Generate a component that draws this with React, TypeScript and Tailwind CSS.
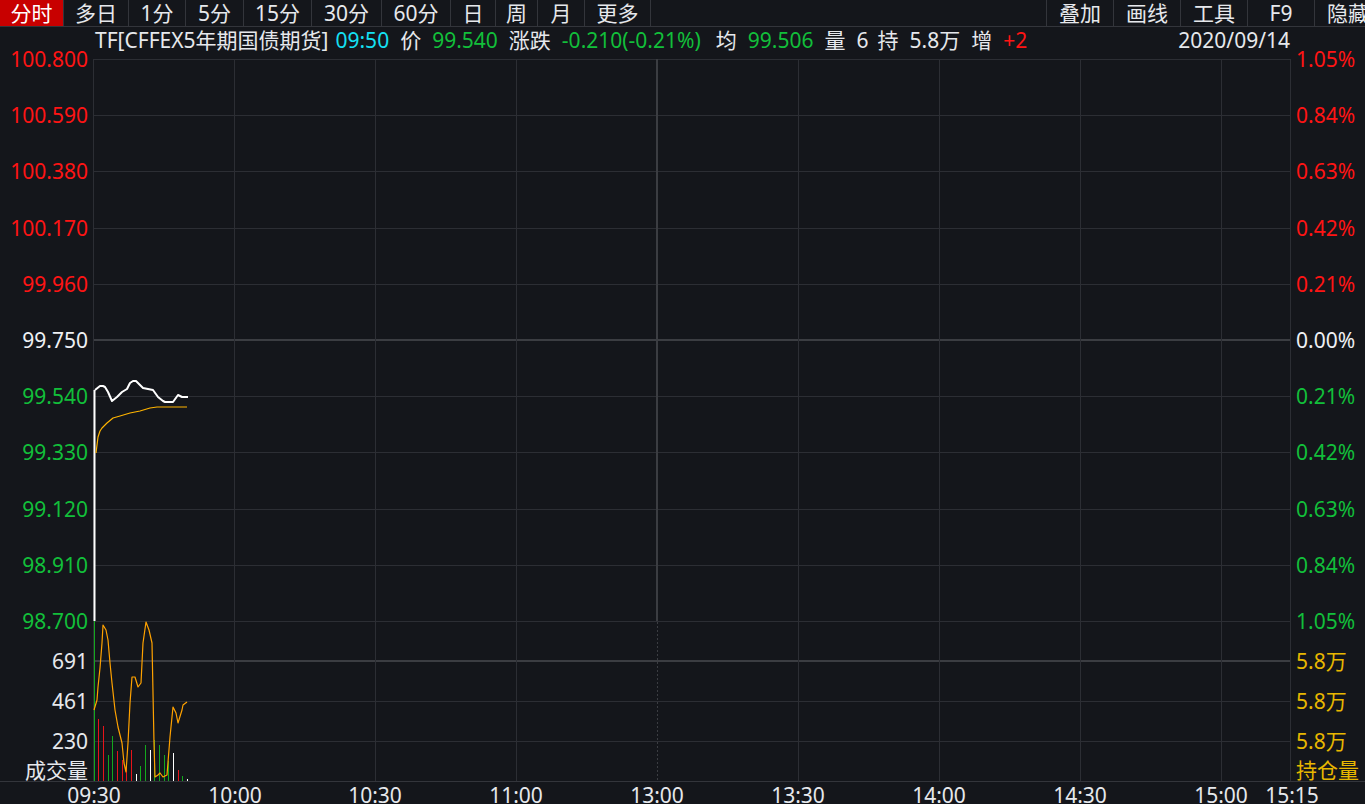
import React from "react";

const RED = "text-[#ff1414]";
const GREEN = "text-[#12bf3a]";

const leftTabs: { label: string; w: string; active?: boolean }[] = [
  { label: "分时", w: "w-[64px]", active: true },
  { label: "多日", w: "w-[65px]" },
  { label: "1分", w: "w-[57px]" },
  { label: "5分", w: "w-[58px]" },
  { label: "15分", w: "w-[68px]" },
  { label: "30分", w: "w-[70px]" },
  { label: "60分", w: "w-[69px]" },
  { label: "日", w: "w-[45px]" },
  { label: "周", w: "w-[42px]" },
  { label: "月", w: "w-[47px]" },
  { label: "更多", w: "w-[66px]" },
];

const rightTabs = ["叠加", "画线", "工具", "F9", "隐藏"];

const priceLabels: { v: string; c: string }[] = [
  { v: "100.800", c: RED },
  { v: "100.590", c: RED },
  { v: "100.380", c: RED },
  { v: "100.170", c: RED },
  { v: "99.960", c: RED },
  { v: "99.750", c: "text-[#eef0f4]" },
  { v: "99.540", c: GREEN },
  { v: "99.330", c: GREEN },
  { v: "99.120", c: GREEN },
  { v: "98.910", c: GREEN },
  { v: "98.700", c: GREEN },
];

const pctLabels: { v: string; c: string }[] = [
  { v: "1.05%", c: RED },
  { v: "0.84%", c: RED },
  { v: "0.63%", c: RED },
  { v: "0.42%", c: RED },
  { v: "0.21%", c: RED },
  { v: "0.00%", c: "text-[#eef0f4]" },
  { v: "0.21%", c: GREEN },
  { v: "0.42%", c: GREEN },
  { v: "0.63%", c: GREEN },
  { v: "0.84%", c: GREEN },
  { v: "1.05%", c: GREEN },
];

const timeLabels: { t: string; x: number }[] = [
  { t: "09:30", x: 94 },
  { t: "10:00", x: 235 },
  { t: "10:30", x: 375 },
  { t: "11:00", x: 516 },
  { t: "13:00", x: 657 },
  { t: "13:30", x: 798 },
  { t: "14:00", x: 939 },
  { t: "14:30", x: 1080 },
  { t: "15:00", x: 1221 },
  { t: "15:15", x: 1292 },
];

const W = 1198;
const H = 722;
const hLines = [0, 56, 112, 169, 225, 337, 393, 450, 506, 562];
const vLines = [141, 282, 423, 705, 846, 987, 1128];

const pricePts = [
  [2, 331], [7, 327], [10, 327], [12, 328], [15, 333], [19, 342], [24, 338], [29, 333],
  [34, 330], [37, 324], [40, 322], [43, 322], [45, 324], [50, 329], [55, 330], [60, 331],
  [65, 338], [70, 342], [72, 343], [80, 343], [85, 336], [89, 338], [95, 338],
];

const avgPts = [
  [3, 394], [5, 378], [7, 372], [9, 369], [14, 364], [20, 359], [27, 357], [37, 354],
  [47, 352], [57, 349], [64, 348], [94, 348],
];

const oiPts = [
  [1, 651], [4, 641], [5, 628], [7, 609], [9, 584], [10, 566], [13, 571], [15, 581],
  [17, 604], [19, 624], [22, 651], [25, 668], [29, 684], [31, 704], [33, 713], [35, 684],
  [37, 644], [39, 618], [42, 618], [45, 628], [48, 624], [50, 584], [53, 563], [56, 571],
  [59, 584], [60, 634], [61, 684], [62, 718], [65, 716], [67, 714], [70, 718], [74, 716],
  [77, 678], [80, 648], [83, 654], [85, 664], [89, 651], [90, 646], [94, 643],
];

const bars: { x: number; top: number; c: string }[] = [
  { x: 1, top: 562, c: "#14a81e" },
  { x: 5, top: 660, c: "#e8141a" },
  { x: 10, top: 667, c: "#e8141a" },
  { x: 15, top: 696, c: "#14a81e" },
  { x: 19, top: 677, c: "#14a81e" },
  { x: 24, top: 692, c: "#e8141a" },
  { x: 29, top: 701, c: "#e8141a" },
  { x: 33, top: 704, c: "#e8141a" },
  { x: 38, top: 691, c: "#e8141a" },
  { x: 43, top: 715, c: "#ffffff" },
  { x: 47, top: 707, c: "#14a81e" },
  { x: 52, top: 686, c: "#14a81e" },
  { x: 57, top: 691, c: "#ffffff" },
  { x: 61, top: 681, c: "#14a81e" },
  { x: 66, top: 686, c: "#14a81e" },
  { x: 71, top: 696, c: "#14a81e" },
  { x: 75, top: 702, c: "#14a81e" },
  { x: 80, top: 694, c: "#ffffff" },
  { x: 85, top: 711, c: "#e8141a" },
  { x: 89, top: 717, c: "#14a81e" },
  { x: 94, top: 720, c: "#ffffff" },
];

const toPath = (pts: number[][]) =>
  pts.map((p, i) => `${i === 0 ? "M" : "L"}${p[0]},${p[1]}`).join(" ");

function Chart() {
  const grid = "#2c2e34";
  const thick = "#3b3d42";
  return (
    <svg width={W} height={H} viewBox={`0 0 ${W} ${H}`} className="block shrink-0">
      <g shapeRendering="crispEdges">
        {hLines.map((y) => (
          <line key={"h" + y} x1={0} x2={W} y1={y + 0.5} y2={y + 0.5} stroke={grid} strokeWidth={1} />
        ))}
        <line x1={0} x2={W} y1={281} y2={281} stroke={thick} strokeWidth={2} />
        <line x1={0} x2={W} y1={602} y2={602} stroke={thick} strokeWidth={2} />
        <line x1={0} x2={W} y1={642.5} y2={642.5} stroke={grid} strokeWidth={1} />
        <line x1={0} x2={W} y1={682.5} y2={682.5} stroke={grid} strokeWidth={1} />
        {vLines.map((x) => (
          <line key={"v" + x} x1={x + 0.5} x2={x + 0.5} y1={0} y2={H} stroke={grid} strokeWidth={1} />
        ))}
        <line x1={564} x2={564} y1={0} y2={562} stroke={thick} strokeWidth={2} />
        <line x1={564.5} x2={564.5} y1={563} y2={H} stroke={thick} strokeWidth={1} strokeDasharray="2 2" />
        <line x1={0.5} x2={0.5} y1={0} y2={H} stroke={grid} strokeWidth={1} />
        <line x1={W - 0.5} x2={W - 0.5} y1={0} y2={H} stroke={grid} strokeWidth={1} />
        {bars.map((b, i) => (
          <rect key={"b" + i} x={b.x} y={b.top} width={1} height={H - b.top} fill={b.c} />
        ))}
      </g>
      <path d={toPath(oiPts)} fill="none" stroke="#ffa200" strokeWidth={1.2} strokeLinejoin="round" />
      <line x1={1.5} x2={1.5} y1={562} y2={331} stroke="#ffffff" strokeWidth={2} />
      <path d={toPath(avgPts)} fill="none" stroke="#ffb400" strokeWidth={1.2} strokeLinejoin="round" />
      <path d={toPath(pricePts)} fill="none" stroke="#ffffff" strokeWidth={2} strokeLinejoin="round" />
    </svg>
  );
}

export default function App() {
  return (
    <div className="w-[1365px] h-[804px] overflow-hidden bg-[#14161b] text-[#e6e8ec] font-['Noto_Sans','Noto_Sans_CJK_SC',sans-serif] text-[21px] leading-[20px] select-none">
      {/* toolbar */}
      <div className="flex h-[27px] border-b border-[#33353b]">
        <div className="flex shrink-0">
          {leftTabs.map((t) => (
            <div
              key={t.label}
              className={`${t.w} flex items-center justify-center border-r border-[#33353b] ${
                t.active ? "bg-[#c80000] text-white" : "text-[#e6e8ec]"
              }`}
            >
              <span className="leading-[24px] -mt-[1px]">{t.label}</span>
            </div>
          ))}
        </div>
        <div className="w-[395px] shrink-0" />
        <div className="flex shrink-0 border-l border-[#33353b]">
          {rightTabs.map((t) => (
            <div key={t} className="w-[67px] shrink-0 flex items-center justify-center border-r border-[#33353b]">
              <span className="leading-[24px] -mt-[1px]">{t}</span>
            </div>
          ))}
        </div>
      </div>

      {/* info line */}
      <div className="flex h-[32px] pt-[3px] pl-[95px] pr-[75px] whitespace-nowrap">
        <div className="flex gap-[11px]">
          <span className="mr-[-4px]">TF[CFFEX5年期国债期货]</span>
          <span className="text-[#14e0f2]">09:50</span>
          <span>价</span>
          <span className={GREEN}>99.540</span>
          <span>涨跌</span>
          <span className={GREEN}>-0.210(-0.21%)</span>
          <span className="ml-[4px]">均</span>
          <span className={GREEN}>99.506</span>
          <span>量</span>
          <span>6</span>
          <span className="-ml-[2px]">持</span>
          <span>5.8万</span>
          <span>增</span>
          <span className={RED}>+2</span>
        </div>
        <span className="ml-auto">2020/09/14</span>
      </div>

      {/* chart area */}
      <div className="flex h-[722px]">
        <div className="w-[93px] shrink-0 flex flex-col items-end pr-[5px] whitespace-nowrap">
          <div className="flex flex-col justify-between items-end h-[582px] -mt-[10px]">
            {priceLabels.map((p) => (
              <span key={p.v} className={`h-[20px] ${p.c}`}>
                {p.v}
              </span>
            ))}
          </div>
          <span className="mt-[20px] h-[20px]">691</span>
          <span className="mt-[20px] h-[20px]">461</span>
          <span className="mt-[20px] h-[20px]">230</span>
          <span className="mt-[9px] h-[20px]">成交量</span>
        </div>
        <Chart />
        <div className="flex-1 flex flex-col items-start pl-[5px] whitespace-nowrap">
          <div className="flex flex-col justify-between items-start h-[582px] -mt-[10px]">
            {pctLabels.map((p, i) => (
              <span key={i} className={`h-[20px] ${p.c}`}>
                {p.v}
              </span>
            ))}
          </div>
          <span className="mt-[20px] h-[20px] text-[#e8b700]">5.8万</span>
          <span className="mt-[20px] h-[20px] text-[#e8b700]">5.8万</span>
          <span className="mt-[20px] h-[20px] text-[#e8b700]">5.8万</span>
          <span className="mt-[9px] h-[20px] text-[#e8b700]">持仓量</span>
        </div>
      </div>

      {/* time axis */}
      <div className="relative h-[23px] border-t border-[#33353b]">
        {timeLabels.map((t) => (
          <span
            key={t.t}
            className="absolute top-[3px] -translate-x-1/2 text-[#e6e8ec]"
            style={{ left: t.x }}
          >
            {t.t}
          </span>
        ))}
      </div>
    </div>
  );
}
